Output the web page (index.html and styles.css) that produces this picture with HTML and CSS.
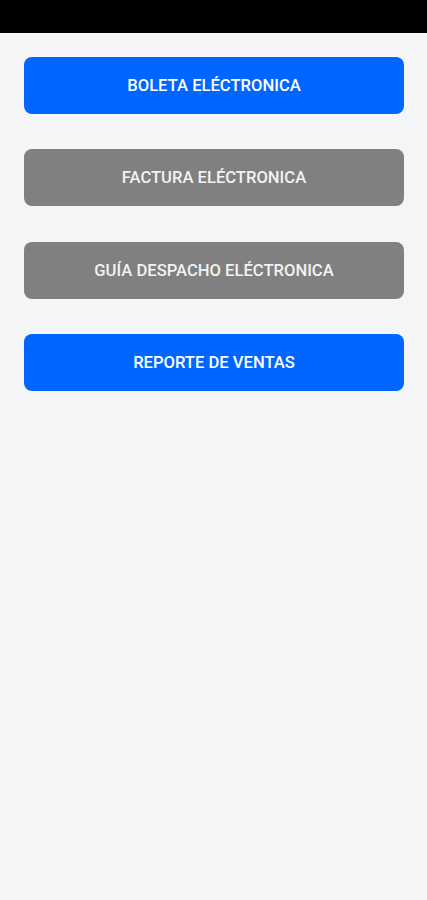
FILE: index.html
```html
<!DOCTYPE html>
<html lang="es">
<head>
    <meta charset="UTF-8">
    <meta name="viewport" content="width=device-width, initial-scale=1.0">
    <title>Menú</title>
    <link rel="stylesheet" href="styles.css">
</head>
<body>
    <div class="status-bar"></div>

    <div class="menu">
        <button class="menu-btn primary">Boleta eléctronica</button>
        <button class="menu-btn disabled">Factura eléctronica</button>
        <button class="menu-btn disabled">Guía despacho eléctronica</button>
        <button class="menu-btn primary">Reporte de ventas</button>
    </div>
</body>
</html>
```

FILE: styles.css
```css
* {
    margin: 0;
    padding: 0;
    box-sizing: border-box;
}

body {
    font-family: Roboto, 'Noto Sans', sans-serif;
    background: #f4f5f7;
    min-height: 100vh;
}

.status-bar {
    height: 33px;
    background: #000;
}

.menu {
    display: flex;
    flex-direction: column;
    gap: 35.4px;
    padding: 24px 23px 0 24px;
}

.menu-btn {
    height: 57px;
    border: none;
    border-radius: 8px;
    color: #fff;
    font-family: inherit;
    font-size: 16.6px;
    font-weight: 500;
    text-transform: uppercase;
    cursor: pointer;
}

.menu-btn.primary {
    background: #0066ff;
}

.menu-btn.disabled {
    background: #808080;
    color: #f2f2f2;
}
```
